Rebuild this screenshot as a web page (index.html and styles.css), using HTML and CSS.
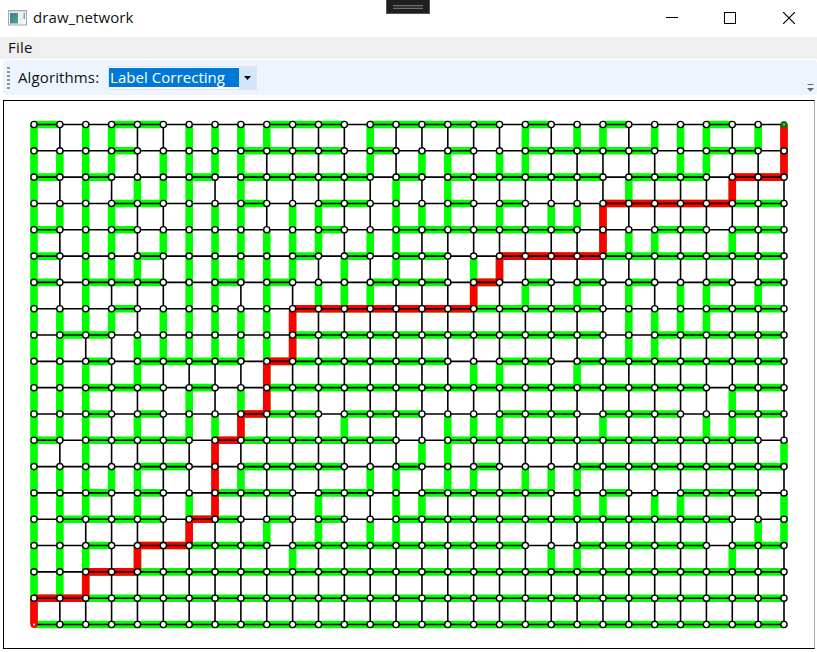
FILE: index.html
```html
<!DOCTYPE html>
<html lang="en">
<head>
<meta charset="utf-8">
<title>draw_network</title>
<link rel="stylesheet" href="styles.css">
</head>
<body>
<div class="window">
  <header class="titlebar">
    <svg class="app-icon" width="19" height="16" viewBox="0 0 19 16">
      <defs><linearGradient id="pane" x1="0" y1="0" x2="1" y2="1"><stop offset="0" stop-color="#3f78a8"/><stop offset="1" stop-color="#55a678"/></linearGradient></defs>
      <rect x="0.5" y="0.5" width="18" height="14.5" fill="#f4f6f8" stroke="#a3a8ae"/>
      <rect x="1" y="1" width="17" height="1.4" fill="#d6dae0"/>
      <rect x="2" y="3" width="8" height="10.5" fill="url(#pane)"/>
      <rect x="11" y="3" width="4" height="10.5" fill="#eceef1"/>
      <rect x="15.5" y="3" width="1.5" height="6" fill="#6faabb"/>
    </svg>
    <span class="title">draw_network</span>
    <div class="debug-tab"><i></i></div>
    <div class="controls">
      <svg width="12" height="12" viewBox="0 0 12 12"><path d="M0 5.5H12"/></svg>
      <svg width="12" height="12" viewBox="0 0 12 12"><rect x="0.5" y="0.5" width="11" height="11"/></svg>
      <svg width="12" height="12" viewBox="0 0 12 12"><path d="M0 0L12 12M12 0L0 12"/></svg>
    </div>
  </header>
  <nav class="menubar"><span>File</span></nav>
  <div class="toolbar">
    <span class="grip"></span>
    <span class="label">Algorithms:</span>
    <div class="combo"><span class="value">Label Correcting</span><span class="arrow"><svg width="7" height="4" viewBox="0 0 7 4"><path d="M0 0H7L3.5 4Z"/></svg></span></div>
    <svg class="overflow" width="7" height="8" viewBox="0 0 7 8"><path d="M0.5 0H6.5V1H0.5ZM0 4H7L3.5 7.5Z"/></svg>
  </div>
  <main class="canvas"><svg id="network" width="810" height="547" viewBox="4 101 810 547"></svg></main>
</div>
<script src="network.js"></script>
</body>
</html>
```
FILE: styles.css
```css
* { box-sizing: border-box; }
body { margin: 0; background: #fff; font-family: "Open Sans", "Noto Sans", sans-serif; color: #111; overflow: hidden; }
.window { width: 817px; height: 652px; display: flex; flex-direction: column; }
.titlebar { position: relative; height: 37px; display: flex; align-items: center; padding: 0 22px 2px 8px; flex: none; }
.app-icon { margin-right: 6px; }
.title { font-size: 15px; line-height: 20px; letter-spacing: 0.08px; margin-top: -2px; }
.debug-tab { position: absolute; left: 386px; top: 0; width: 44px; height: 14px; background: #1f1f1f; border: 1px solid #555; border-top: 0; padding: 5px 6px; }
.debug-tab i { display: block; height: 4px; border: solid #707070; border-width: 1px 0; background: #333; }
.controls { margin-left: auto; display: flex; gap: 47px; }
.controls svg { fill: none; stroke: #000; stroke-width: 1; }
.controls svg:first-child { margin-right: -1px; }
.controls svg:last-child { stroke-width: 1.2; }
.menubar { height: 22px; flex: none; background: #efefef; padding-left: 8px; font-size: 15px; line-height: 20px; letter-spacing: 0.2px; }
.toolbar { height: 35px; flex: none; margin: 1px 0 5px 3px; background: #edf4fd; border-radius: 4px; display: flex; align-items: center; padding: 0 3px 0 4px; }
.grip { width: 3px; height: 22px; background: repeating-linear-gradient(#8d939a 0 2px, transparent 2px 4px); margin-right: 8px; }
.label { font-size: 15px; width: 90px; letter-spacing: 0.12px; margin-top: -2px; }
.combo { display: flex; width: 149px; height: 24px; border: 1px solid #dfe6ee; background: #fff; }
.value { width: 130px; margin: 1px 0; padding-left: 1px; background: #0078d7; color: #fff; font-size: 15px; line-height: 18px; letter-spacing: 0.05px; white-space: nowrap; height: 19px; }
.arrow { flex: 1; background: #d2e5fb; display: flex; align-items: center; justify-content: center; }
.arrow svg { fill: #000; }
.overflow { margin-left: auto; align-self: flex-end; margin-bottom: 3px; fill: #666; }
.canvas { height: 549px; width: 812px; flex: none; margin-left: 3px; border: 1px solid #000; border-right-color: #aaa; }
.canvas svg { display: block; }
.tree { fill: none; stroke: #0f0; stroke-width: 7.6; }
.route { fill: none; stroke: #f00; stroke-width: 7.6; }
.link { fill: none; stroke: #000; stroke-width: 1.6; }
.node { fill: #fff; stroke: #000; stroke-width: 1.35; }
.origin { fill: #fff; stroke: #f00; stroke-width: 2.4; }
.target { fill: #8fbf8f; stroke: #008000; stroke-width: 2.4; }
```
FILE: network.js
```js
// Columns whose predecessor is the node below; every other node is reached from its left.
const fromBelow = [
  [0,2,3,6,7,8,9,13,19,21,22,24,25,26,28,29],
  [0,1,2,3,5,6,7,8,13,15,16,18,19,25,26,29],
  [0,2,4,5,6,8,14,16,23,27],
  [0,1,2,3,6,7,8,10,11,14,15,16,18,20,21,22],
  [0,2,3,5,6,7,8,9,10,11,13,14,22,23,24,27],
  [0,2,3,4,6,7,8,9,10,12,14,17,18],
  [0,2,6,7,9,11,12,13,17,19,21,23,25,26,28],
  [0,1,2,3,5,6,7,8,9,10,23,24,25,26],
  [0,1,4,5,6,7,8,9,10,23,24],
  [0,1,2,4,9,17,18,21],
  [0,1,2,6,8,9,27],
  [0,1,2,4,6,7,8,12,16,17,18,22,26,27],
  [0,2,7,15,16,29],
  [0,1,2,3,4,7,8,13,14,16,17,19,20,21],
  [0,1,2,4,6,7,11,14,15,21,22,24,25,29],
  [0,1,6,9,11,13,14,28,29],
  [0,1,2,4,10,20,21,27],
  [0,1,2],
  [0],
  []
];
const cols = 30, rows = 20;
const px = c => 34 + c * 750 / 29;
const py = r => 124.5 + r * 500 / 19;
const seg = (c1, r1, c2, r2) => `M${px(c1)} ${py(r1)}L${px(c2)} ${py(r2)}`;
let tree = "", links = "", nodes = "";
for (let r = 0; r < rows; r++) {
  for (let c = 0; c < cols; c++) {
    const below = fromBelow[r].includes(c);
    if (below) tree += seg(c, r, c, r + 1);
    else {
      if (c > 0) tree += seg(c, r, c - 1, r);
      if (r < rows - 1) links += seg(c, r, c, r + 1);
    }
    if (c > 0) links += seg(c, r, c - 1, r);
    const kind = c === 0 && r === 19 ? "origin" : c === 29 && r === 0 ? "target" : "node";
    const radius = kind === "node" ? 3.1 : 2.3;
    nodes += `<circle class="${kind}" cx="${px(c)}" cy="${py(r)}" r="${radius}"/>`;
  }
}
// Walk the predecessors back from the target to the origin.
let c = 29, r = 0, route = "";
while (c > 0 || r < 19) {
  if (fromBelow[r].includes(c)) { route += seg(c, r, c, r + 1); r++; }
  else { route += seg(c, r, c - 1, r); c--; }
}
document.getElementById("network").innerHTML =
  `<path class="tree" d="${tree}"/><path class="route" d="${route}"/><path class="link" d="${links}"/>${nodes}`;
```
